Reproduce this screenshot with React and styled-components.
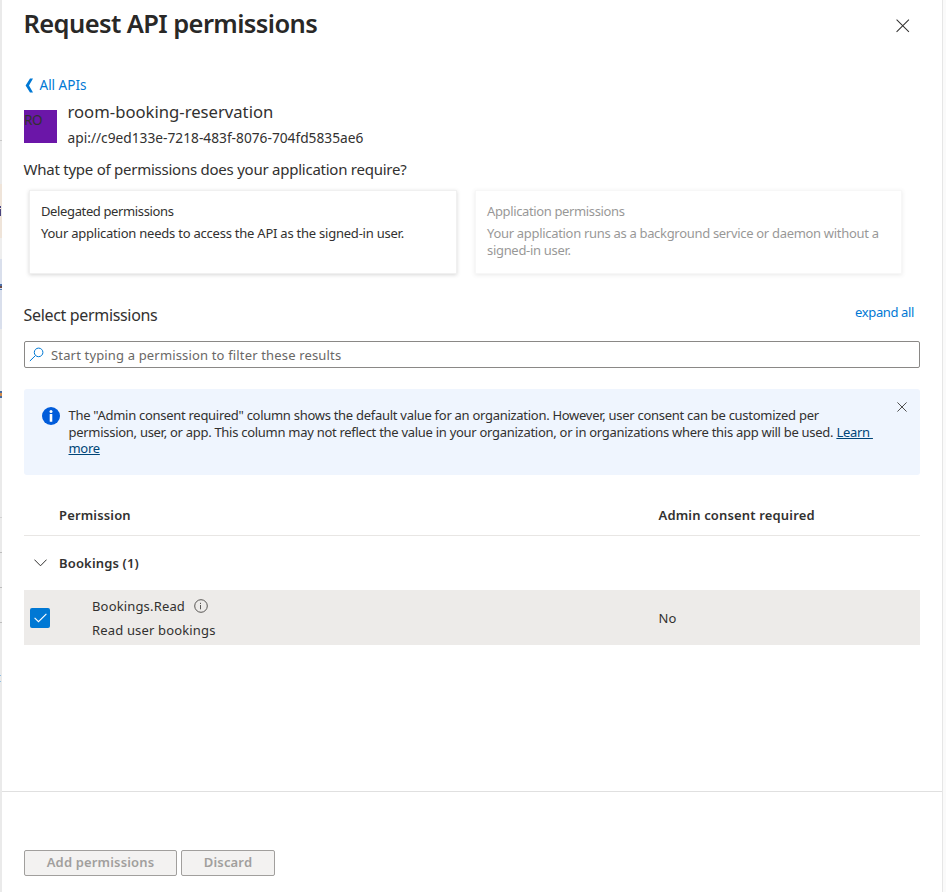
import React from "react";
import styled, { createGlobalStyle, css } from "styled-components";

const GlobalStyle = createGlobalStyle`
  * { box-sizing: border-box; }
  body {
    margin: 0;
    background: #fff;
    color: #323130;
    font-family: "Noto Sans", "Open Sans", sans-serif;
    font-size: 13px;
    overflow: hidden;
  }
  button { font-family: inherit; }
  svg { flex: none; }
`;

const compact = css`
  font-size: 13px;
  letter-spacing: -0.23px;
`;
const regular = css`
  font-size: 13px;
  letter-spacing: 0.16px;
`;

const Page = styled.div`
  display: flex;
  width: 946px;
  height: 892px;
  background: #fafafa;
`;
const Backdrop = styled.div`
  width: 2px;
  flex: none;
  background: #eaeaea;
`;
const Band = styled.div`
  width: ${(p) => p.$w || 2}px;
  height: ${(p) => p.$h}px;
  background: ${(p) => p.$color || "transparent"};
`;
const Blade = styled.main`
  width: 941px;
  flex: none;
  display: flex;
  flex-direction: column;
  background: #fff;
  border-right: 1px solid #e6e6e6;
`;
const Content = styled.div`
  height: 791px;
  padding: 0 22px;
`;
const Header = styled.header`
  display: flex;
  justify-content: space-between;
  align-items: flex-start;
  height: 76px;
  padding: 5px 10px 0 0;
`;
const Title = styled.h1`
  margin: 0;
  font-size: 25.5px;
  font-weight: 600;
  line-height: 36px;
  letter-spacing: -0.6px;
  margin-left: -0.5px;
  color: #292827;
`;
const IconButton = styled.button`
  display: flex;
  margin: ${(p) => p.$margin};
  padding: 0;
  border: 0;
  background: none;
`;
const BackLink = styled.a`
  display: flex;
  align-items: center;
  gap: 4.5px;
  height: 18px;
  margin-bottom: 1px;
  color: #0078d4;
  font-size: 13.5px;
`;
const ApiSummary = styled.section`
  display: flex;
  gap: 10.5px;
  height: 61px;
  padding-top: 5px;
`;
const ApiLogo = styled.div`
  width: 33px;
  height: 33px;
  margin-top: 10px;
  background: #6b16a8;
  font-size: 13.5px;
  line-height: 20px;
  letter-spacing: -0.3px;
`;
const ApiName = styled.div`
  font-size: 16.67px;
  line-height: 24px;
`;
const ApiUri = styled.div`
  font-size: 13.74px;
  line-height: 28px;
`;
const Question = styled.p`
  margin: 0 0 0 -0.5px;
  height: 34px;
  font-size: 15px;
  line-height: 27px;
  letter-spacing: -0.245px;
`;
const Cards = styled.div`
  display: flex;
  gap: 18px;
  padding-left: 5px;
`;
const Card = styled.article`
  width: ${(p) => p.$width}px;
  height: 84px;
  padding: 11px;
  border: 1px solid #f0f0f0;
  box-shadow: 0 1px 4px rgba(0, 0, 0, 0.16);
  opacity: ${(p) => (p.$disabled ? 0.5 : 1)};
  line-height: 17px;
  ${compact}
  ${(p) => p.$disabled && css`letter-spacing: -0.31px;`}
`;
const CardTitle = styled.div`
  line-height: 18px;
  margin-bottom: 5px;
  letter-spacing: -0.37px;
`;
const SectionHeader = styled.div`
  display: flex;
  justify-content: space-between;
  height: 67px;
  padding: 28px 6px 0 0;
`;
const SectionTitle = styled.h2`
  margin: 0 0 0 -0.5px;
  font-size: 16px;
  font-weight: 400;
  line-height: 26px;
  letter-spacing: -0.33px;
`;
const ExpandLink = styled.a`
  color: #0078d4;
  line-height: 20px;
  font-size: 13px;
  letter-spacing: -0.37px;
`;
const SearchBox = styled.div`
  display: flex;
  align-items: flex-start;
  gap: 7px;
  width: 896px;
  height: 27px;
  padding: 5px 4px 0;
  border: 1px solid #8a8886;
  border-radius: 2px;
  color: #6a6866;
  line-height: 16px;
  ${regular}
`;
const Banner = styled.aside`
  display: flex;
  align-items: flex-start;
  width: 896px;
  height: 86px;
  margin-top: 21px;
  padding: 18px 0 0 18px;
  border-radius: 3px;
  background: #eff5fe;
`;
const BannerText = styled.div`
  flex: none;
  width: 810px;
  margin-left: 8.5px;
  line-height: 16.6px;
  white-space: pre;
  font-size: 13px;
  letter-spacing: -0.283px;
`;
const LearnMore = styled.a`
  color: #004578;
  text-decoration: underline;
`;
const Table = styled.div`
  width: 896px;
  margin-top: 20px;
`;
const Row = styled.div`
  display: grid;
  grid-template-columns: ${(p) => (p.$nested ? "68px 566.5px 1fr" : "35px 599.5px 1fr")};
  align-items: center;
  height: ${(p) => p.$height}px;
  background: ${(p) => (p.$selected ? "#edebe9" : "transparent")};
  border-bottom: ${(p) => (p.$ruled ? "1px solid #e8e6e4" : "0")};
  font-weight: ${(p) => (p.$strong ? 600 : 400)};
  ${regular}
`;
const IconCell = styled.div`
  display: flex;
  padding-left: ${(p) => p.$inset}px;
`;
const Checkbox = styled.div`
  display: grid;
  place-items: center;
  width: 20px;
  height: 20px;
  border-radius: 2px;
  background: #0078d4;
`;
const PermissionName = styled.div`
  display: flex;
  align-items: center;
  gap: 9px;
  line-height: 24px;
`;
const Footer = styled.footer`
  display: flex;
  gap: 4px;
  height: 101px;
  padding: 58px 22px 0;
  border-top: 1px solid #e0e0e0;
`;
const ActionButton = styled.button`
  width: ${(p) => p.$width}px;
  height: 26px;
  padding: 0 0 3px;
  border: 1px solid #a19f9d;
  border-radius: 2px;
  background: #f3f2f1;
  color: #a19f9d;
  font-weight: 600;
  ${regular}
`;

const Cross = ({ size, weight }) => (
  <svg width={size} height={size} viewBox="0 0 14 14" fill="none" stroke="#323130">
    <path d="M.6.6 13.4 13.4M13.4.6.6 13.4" strokeWidth={weight} />
  </svg>
);
const BackChevron = () => (
  <svg width="11" height="15" viewBox="0 0 11 15" fill="#0078d4">
    <path d="M6 .5H9L5 7.5 9 14.5H6L1.6 7.5Z" />
  </svg>
);
const SearchIcon = () => (
  <svg width="15" height="15" viewBox="0 0 15 15" fill="none" stroke="#0078d4" strokeWidth="1">
    <circle cx="9.6" cy="5.4" r="4.3" />
    <path d="M6.5 8.5.9 14" />
  </svg>
);
const InfoFilled = () => (
  <svg width="18" height="18" viewBox="0 0 18 18">
    <circle cx="9" cy="9" r="9" fill="#015cda" />
    <circle cx="9" cy="4.5" r="1.5" fill="#fff" />
    <rect x="7.7" y="7" width="2.6" height="7.8" rx=".5" fill="#fff" />
  </svg>
);
const InfoOutline = () => (
  <svg width="14" height="14" viewBox="0 0 14 14" fill="none" stroke="#484644">
    <circle cx="7" cy="7" r="6.3" strokeWidth=".9" />
    <path d="M6.5 6V10.3M6.5 3.8V5" strokeWidth=".9" />
  </svg>
);
const ChevronDown = () => (
  <svg width="13" height="8" viewBox="0 0 13 8" fill="none" stroke="#323130" strokeWidth="1">
    <path d="M.4.6 6.5 6.8 12.6.6" />
  </svg>
);
const Check = () => (
  <svg width="13" height="10" viewBox="0 0 13 10" fill="none" stroke="#fff" strokeWidth="1.1">
    <path d="M.6 4.8 4.5 8.7 12.4.8" />
  </svg>
);

const BANDS = [
  [140], [1, "#c8c8c8"], [43], [22, "#efe4d9"], [2, "#4a437c", 1], [1, "#efe4d9"],
  [7, "#4a437c", 1], [22, "#efe4d9"], [21, "#eeeeee"], [25, "#d9dfec"], [2, "#4d6fa8"],
  [2, "#6b4a45"], [1, "#d9dfec"], [1, "#5d86bd"], [39, "#d9dfec"], [62],
  [2, "#476a9e"], [3, "#d08a4a"], [2, "#476a9e"], [119], [1, "#d2d2d2"], [34],
  [1, "#bdbdbd"], [34], [1, "#bdbdbd"], [34], [1, "#bdbdbd"], [52],
  [1, "#8fc0e4", 1], [5], [1, "#8fc0e4", 1],
];

export default function App() {
  return (
    <>
      <GlobalStyle />
      <Page>
        <Backdrop>
          {BANDS.map(([h, color, w], i) => <Band key={i} $h={h} $color={color} $w={w} />)}
        </Backdrop>
        <Blade>
          <Content>
            <Header>
              <Title>Request API permissions</Title>
              <IconButton $margin="14px 0.5px 0 0" aria-label="Close"><Cross size={13.5} weight={1.05} /></IconButton>
            </Header>
            <BackLink><BackChevron />All APIs</BackLink>
            <ApiSummary>
              <ApiLogo>RO</ApiLogo>
              <div>
                <ApiName>room-booking-reservation</ApiName>
                <ApiUri>api://c9ed133e-7218-483f-8076-704fd5835ae6</ApiUri>
              </div>
            </ApiSummary>
            <Question>What type of permissions does your application require?</Question>
            <Cards>
              <Card $width={428}>
                <CardTitle>Delegated permissions</CardTitle>
                Your application needs to access the API as the signed-in user.
              </Card>
              <Card $width={427} $disabled>
                <CardTitle>Application permissions</CardTitle>
                Your application runs as a background service or daemon without a signed-in user.
              </Card>
            </Cards>
            <SectionHeader>
              <SectionTitle>Select permissions</SectionTitle>
              <ExpandLink>expand all</ExpandLink>
            </SectionHeader>
            <SearchBox><SearchIcon />Start typing a permission to filter these results</SearchBox>
            <Banner>
              <InfoFilled />
              <BannerText>
                <div>The "Admin consent required" column shows the default value for an organization. However, user consent can be customized per</div>
                <div>permission, user, or app. This column may not reflect the value in your organization, or in organizations where this app will be used. <LearnMore>{"Learn "}</LearnMore></div>
                <div><LearnMore>more</LearnMore></div>
              </BannerText>
              <IconButton $margin="-5px 0 0 18px" aria-label="Dismiss"><Cross size={10} weight={1.2} /></IconButton>
            </Banner>
            <Table>
              <Row $height={41} $ruled $strong>
                <span /><span>Permission</span><span>Admin consent required</span>
              </Row>
              <Row $height={54} $strong>
                <IconCell $inset={10}><ChevronDown /></IconCell><span>Bookings (1)</span><span />
              </Row>
              <Row $height={55} $nested $selected>
                <IconCell $inset={6}><Checkbox><Check /></Checkbox></IconCell>
                <div>
                  <PermissionName>Bookings.Read<InfoOutline /></PermissionName>
                  <PermissionName>Read user bookings</PermissionName>
                </div>
                <span>No</span>
              </Row>
            </Table>
          </Content>
          <Footer>
            <ActionButton $width={153}>Add permissions</ActionButton>
            <ActionButton $width={94}>Discard</ActionButton>
          </Footer>
        </Blade>
      </Page>
    </>
  );
}
